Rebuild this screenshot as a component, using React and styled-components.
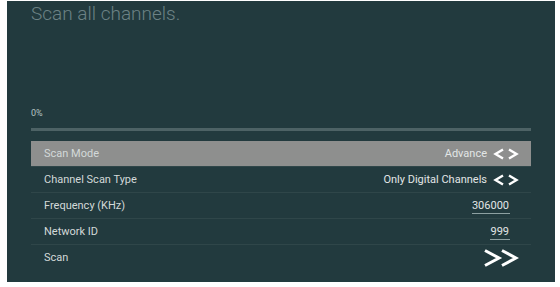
import React from "react";
import styled, { createGlobalStyle } from "styled-components";

const Global = createGlobalStyle`
  html, body { margin: 0; padding: 0; background: #ffffff; }
  body { font-family: Roboto, "Noto Sans", "Liberation Sans", sans-serif; }
`;

const Screen = styled.div`
  margin: 1px 5px 0 7px;
  height: 281px;
  box-sizing: border-box;
  background: #223a3e;
  padding: 0 24px;
  display: flex;
  flex-direction: column;
`;

const Title = styled.div`
  font-size: 19px;
  font-weight: 300;
  color: #6c8285;
  line-height: 26px;
`;

const Percent = styled.div`
  margin-top: 80px;
  font-size: 9px;
  color: #b7c3c3;
  line-height: 12px;
`;

const Progress = styled.div`
  margin-top: 9px;
  height: 3px;
  background: #4d6265;
`;

const List = styled.div`
  margin-top: 10px;
  display: flex;
  flex-direction: column;
`;

const Row = styled.div`
  height: 26px;
  box-sizing: border-box;
  display: flex;
  align-items: center;
  justify-content: space-between;
  padding: 0 ${(p) => p.$pr ?? 12}px 0 13px;
  background: ${(p) => (p.$active ? "#8e8f8e" : "transparent")};
  border-bottom: 1px solid ${(p) => (p.$last ? "transparent" : "#2f4649")};
  font-size: 11px;
  color: #d3d9d9;
`;

const Label = styled.span``;

const Value = styled.span`
  display: flex;
  align-items: center;
  gap: 6px;
  color: #e2e6e6;
`;

const Field = styled.span`
  padding-right: 1px;
  border-bottom: 1px solid #8da0a1;
  line-height: 14px;
  margin-top: 2px;
`;

const Arrows = () => (
  <svg width="26" height="12" viewBox="0 0 26 12">
    <polyline points="10,1.5 2.5,6 10,10.5" fill="none" stroke="#ffffff" strokeWidth="2.4" />
    <polyline points="16,1.5 23.5,6 16,10.5" fill="none" stroke="#ffffff" strokeWidth="2.4" />
  </svg>
);

const Forward = () => (
  <svg width="36" height="18" viewBox="0 0 36 18">
    <polyline points="2,1.5 16,9 2,16.5" fill="none" stroke="#ffffff" strokeWidth="3" />
    <polyline points="19,1.5 33,9 19,16.5" fill="none" stroke="#ffffff" strokeWidth="3" />
  </svg>
);

export default function App() {
  return (
    <>
      <Global />
      <Screen>
        <Title>Scan all channels.</Title>
        <Percent>0%</Percent>
        <Progress />
        <List>
          <Row $active>
            <Label>Scan Mode</Label>
            <Value>
              Advance <Arrows />
            </Value>
          </Row>
          <Row>
            <Label>Channel Scan Type</Label>
            <Value>
              Only Digital Channels <Arrows />
            </Value>
          </Row>
          <Row $pr={21}>
            <Label>Frequency (KHz)</Label>
            <Value>
              <Field>306000</Field>
            </Value>
          </Row>
          <Row $pr={21}>
            <Label>Network ID</Label>
            <Value>
              <Field>999</Field>
            </Value>
          </Row>
          <Row $last $pr={12}>
            <Label>Scan</Label>
            <Value>
              <Forward />
            </Value>
          </Row>
        </List>
      </Screen>
    </>
  );
}
